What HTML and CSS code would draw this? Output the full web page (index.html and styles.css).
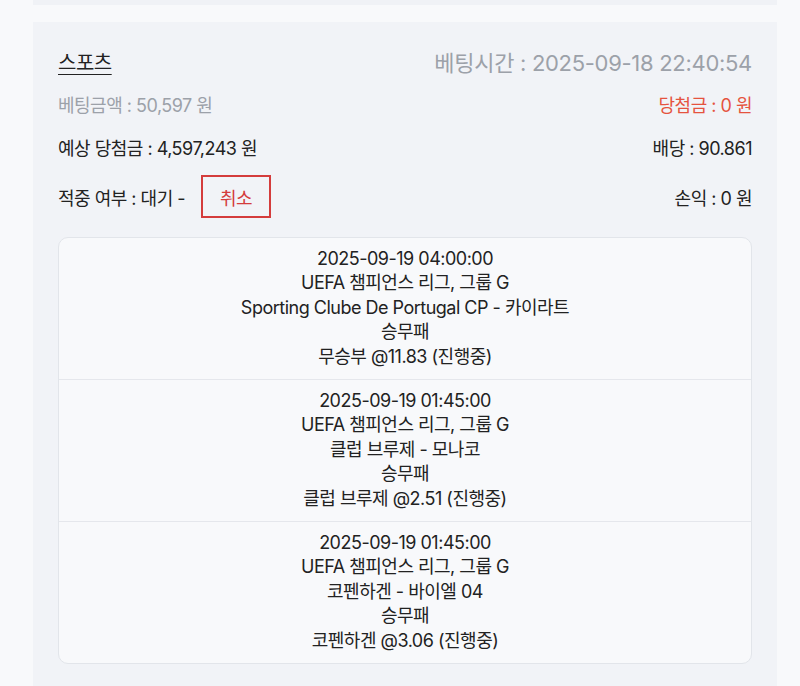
FILE: index.html
```html
<!DOCTYPE html>
<html lang="ko">
<head>
<meta charset="UTF-8">
<meta name="viewport" content="width=device-width, initial-scale=1.0">
<title>베팅내역</title>
<link rel="stylesheet" href="styles.css">
</head>
<body>
<div class="page">
  <div class="prev-card"></div>

  <div class="bet-card">
    <div class="row row-head">
      <a href="#" class="category">스포츠</a>
      <span class="muted time">베팅시간 : 2025-09-18 22:40:54</span>
    </div>
    <div class="row row-amount">
      <span class="muted">베팅금액 : 50,597 원</span>
      <span class="win">당첨금 : 0 원</span>
    </div>
    <div class="row row-expect">
      <span>예상 당첨금 : 4,597,243 원</span>
      <span>배당 : 90.861</span>
    </div>
    <div class="row row-status">
      <div class="status">
        <span>적중 여부 : 대기 -</span>
        <button class="cancel-btn">취소</button>
      </div>
      <span>손익 : 0 원</span>
    </div>

    <div class="games">
      <div class="game">
        <div>2025-09-19 04:00:00</div>
        <div>UEFA 챔피언스 리그, 그룹 G</div>
        <div>Sporting Clube De Portugal CP - 카이라트</div>
        <div>승무패</div>
        <div>무승부 @11.83 (진행중)</div>
      </div>
      <div class="game">
        <div>2025-09-19 01:45:00</div>
        <div>UEFA 챔피언스 리그, 그룹 G</div>
        <div>클럽 브루제 - 모나코</div>
        <div>승무패</div>
        <div>클럽 브루제 @2.51 (진행중)</div>
      </div>
      <div class="game">
        <div>2025-09-19 01:45:00</div>
        <div>UEFA 챔피언스 리그, 그룹 G</div>
        <div>코펜하겐 - 바이엘 04</div>
        <div>승무패</div>
        <div>코펜하겐 @3.06 (진행중)</div>
      </div>
    </div>
  </div>
</div>
</body>
</html>
```

FILE: styles.css
```css
body {
  margin: 0;
  padding: 0;
  background-color: #f8f9fb;
  font-family: Inter, "Noto Sans CJK KR", sans-serif;
  color: #222;
  font-size: 18px;
  letter-spacing: -0.5px;
}

.page {
  padding: 0 23px 0 33px;
}

.prev-card {
  height: 5px;
  background-color: #f0f2f6;
}

.bet-card {
  margin-top: 17px;
  background-color: #f1f3f7;
  padding: 24px 25px 30px 25px;
}

.row {
  display: flex;
  justify-content: space-between;
  align-items: center;
  height: 26px;
}

.row-head {
  height: 30px;
}

.row-amount {
  margin-top: 15px;
}

.row-expect {
  margin-top: 17px;
}

.row-status {
  height: 43px;
  margin-top: 15px;
}

.category {
  color: #222;
  font-size: 20px;
  text-decoration: underline;
  text-underline-offset: 4px;
  text-decoration-thickness: 1px;
}

.muted {
  color: #9ca1a9;
}

.time {
  font-size: 22px;
  letter-spacing: -0.3px;
}

.win {
  color: #e5533f;
}

.status {
  display: flex;
  align-items: center;
  gap: 16px;
}

.cancel-btn {
  box-sizing: border-box;
  height: 43px;
  width: 70px;
  background-color: transparent;
  border: 2px solid #d43c3c;
  color: #d43c3c;
  font-family: inherit;
  font-size: 18px;
  letter-spacing: -0.5px;
  cursor: pointer;
}

.games {
  margin-top: 19px;
  background-color: #f8f9fb;
  border: 1px solid #e2e5ea;
  border-radius: 10px;
}

.game {
  text-align: center;
  line-height: 24.4px;
  padding: 9px 0 10px 0;
  border-bottom: 1px solid #e5e7ec;
}

.game:last-child {
  border-bottom: none;
}
```
